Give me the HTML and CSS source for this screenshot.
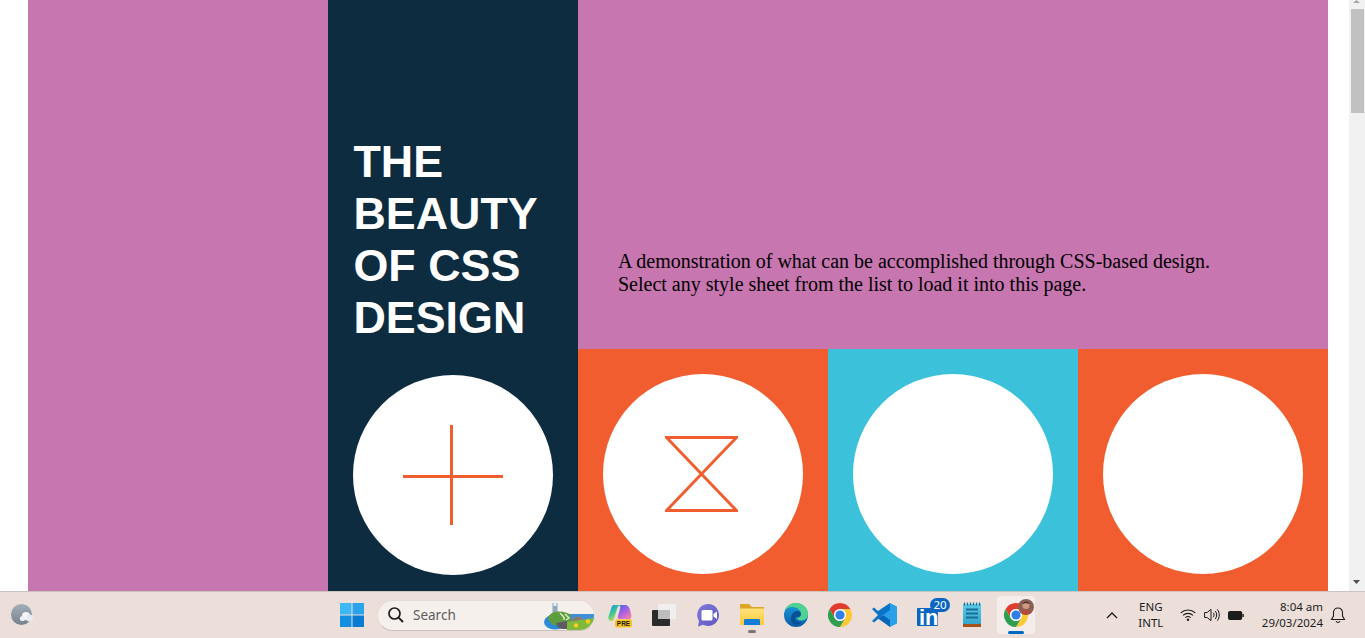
FILE: index.html
```html
<!DOCTYPE html>
<html lang="en">
  <head>
    <meta charset="UTF-8" />
    <title>The Beauty of CSS Design</title>
    <link rel="stylesheet" href="styles.css">
  </head>
  <body>
    <svg class="defs" width="0" height="0">
      <defs>
        <linearGradient id="copilotA" x1="0" y1="0" x2="0.6" y2="1">
          <stop offset="0" stop-color="#1b8fdc" />
          <stop offset="0.5" stop-color="#35c79a" />
          <stop offset="1" stop-color="#f2d83f" />
        </linearGradient>
        <linearGradient id="copilotB" x1="0" y1="0" x2="0.7" y2="1">
          <stop offset="0" stop-color="#2f6fe8" />
          <stop offset="0.5" stop-color="#a35fe4" />
          <stop offset="1" stop-color="#f07ab4" />
        </linearGradient>
        <linearGradient id="folder" x1="0" y1="0" x2="0" y2="1">
          <stop offset="0" stop-color="#ffe27a" />
          <stop offset="1" stop-color="#fcc83a" />
        </linearGradient>
        <linearGradient id="edge" x1="0" y1="0" x2="0" y2="1">
          <stop offset="0" stop-color="#1aa0dc" />
          <stop offset="1" stop-color="#0b5aa8" />
        </linearGradient>
        <linearGradient id="pad" x1="0" y1="0" x2="0" y2="1">
          <stop offset="0" stop-color="#5ccbe6" />
          <stop offset="1" stop-color="#36a6cf" />
        </linearGradient>
        <linearGradient id="meet" x1="0" y1="0" x2="1" y2="1">
          <stop offset="0" stop-color="#7f78dc" />
          <stop offset="1" stop-color="#5f58bf" />
        </linearGradient>
        <linearGradient id="moon" x1="0" y1="0" x2="0" y2="1">
          <stop offset="0" stop-color="#a3aeb8" />
          <stop offset="1" stop-color="#76838f" />
        </linearGradient>
        <symbol id="chrome" viewBox="0 0 32 32">
          <path fill="#e33b2e" d="M5.6 10A12 12 0 0 1 26.4 10H16A6 6 0 0 0 10.8 19Z" />
          <path fill="#fcc934" d="M26.4 10A12 12 0 0 1 16 28L21.2 19A6 6 0 0 0 16 10Z" />
          <path fill="#2f9e4f" d="M16 28A12 12 0 0 1 5.6 10L10.8 19A6 6 0 0 0 21.2 19Z" />
          <circle cx="16" cy="16" r="6" fill="#fff" />
          <circle cx="16" cy="16" r="4.6" fill="#2f7fe6" />
        </symbol>
      </defs>
    </svg>

    <div class="screen">
      <div class="page">
        <div class="layout">
          <div class="side"></div>

          <div class="brand">
            <h1>THE BEAUTY OF CSS DESIGN</h1>
            <div class="circle circle-brand">
              <svg width="100" height="100" viewBox="0 0 100 100">
                <rect x="47" y="0" width="3" height="100" fill="#f25d30" />
                <rect x="0" y="50" width="100" height="3" fill="#f25d30" />
              </svg>
            </div>
          </div>

          <div class="main">
            <div class="intro">
              <p>A demonstration of what can be accomplished through CSS-based design. Select any style sheet from the list to load it into this page.</p>
            </div>
            <div class="cells">
              <div class="cell orange">
                <div class="circle">
                  <svg class="hourglass" width="73" height="76" viewBox="0 0 73 76">
                    <path d="M1.5 1.5H71.5L1.5 74.5H71.5Z" fill="none" stroke="#f25d30" stroke-width="3" />
                  </svg>
                </div>
              </div>
              <div class="cell cyan"><div class="circle"></div></div>
              <div class="cell orange"><div class="circle"></div></div>
            </div>
          </div>
        </div>

        <div class="scrollbar">
          <svg class="arrow" width="7" height="3" viewBox="0 0 7 3"><path d="M3.5 0L7 3H0Z" fill="#a3a3a3" /></svg>
          <div class="thumb"></div>
          <svg class="arrow arrow-down" width="7" height="4" viewBox="0 0 7 4"><path d="M0 0H7L3.5 4Z" fill="#505050" /></svg>
        </div>
      </div>

      <footer class="taskbar">
        <div class="weather">
          <svg width="23" height="24" viewBox="0 0 23 24">
            <circle cx="10.5" cy="11.5" r="10.5" fill="url(#moon)" />
            <circle cx="15" cy="13" r="4" fill="#f4f5f6" />
            <circle cx="18.5" cy="15" r="3.5" fill="#e8ebee" />
            <circle cx="11.5" cy="15.5" r="2.6" fill="#eef0f2" />
          </svg>
        </div>

        <div class="start">
          <svg width="24" height="24" viewBox="0 0 24 24">
            <rect x="0" y="0" width="11.5" height="11.5" fill="#3cb8f2" />
            <rect x="12.5" y="0" width="11.5" height="11.5" fill="#2aa3ea" />
            <rect x="0" y="12.5" width="11.5" height="11.5" fill="#148fe0" />
            <rect x="12.5" y="12.5" width="11.5" height="11.5" fill="#0a7ad2" />
          </svg>
        </div>

        <div class="search">
          <svg width="18" height="18" viewBox="0 0 18 18">
            <circle cx="7.5" cy="7.5" r="5.5" fill="none" stroke="#1c1c1c" stroke-width="1.7" />
            <path d="M11.6 11.6L16 16" stroke="#1c1c1c" stroke-width="1.9" />
          </svg>
          <span class="search-label">Search</span>
          <svg class="search-art" width="50" height="28" viewBox="0 0 50 28">
            <rect x="22" y="12" width="28" height="9" fill="#3f8fd8" />
            <path d="M26 20Q33 9 42 20Z" fill="#8a7b72" />
            <ellipse cx="11" cy="20" rx="11" ry="7.5" fill="#2c8ad8" />
            <rect x="8.5" y="1" width="5" height="11" fill="#8fa8bb" />
            <rect x="9.5" y="0" width="3" height="4" fill="#e6edf2" />
            <path d="M4 15C8 8 20 8 27 13V20L18 23H9C6 20 4 18 4 15z" fill="#5f9e3e" />
            <path d="M12 21L23 19V27H18C15 27 13 24 12 21z" fill="#5f5a66" />
            <path d="M23 20L50 16V23C48 27 45 28 40 28H23z" fill="#7fb93a" />
            <path d="M16 11c2 3 5 3 4 7M21 12l4 4-3 2" fill="none" stroke="#e9f3d2" stroke-width="1.3" />
            <circle cx="32" cy="23.5" r="2.2" fill="#f7cf22" />
            <circle cx="44" cy="19.5" r="2.2" fill="#f7cf22" />
          </svg>
        </div>

        <div class="apps">
          <div class="app">
            <svg width="32" height="32" viewBox="0 0 32 32">
              <path d="M10 6h7c-2 0-3 1-4 4l-3 10c-.5 1.5-1 2-2 2-4 0-4-3-3-6l2-6c.6-2.5 1.5-4 3-4z" fill="url(#copilotA)" />
              <path d="M14 20c3 2 7 2 13-1 0 2-2 3-4 3H13z" fill="#e8c848" />
              <path d="M15 6h6c3 0 4 2 5 5l1 4c1 3 0 5-3 5h-8c-2 0-3-1-2-3l2-7c.4-2 .6-4-1-4z" fill="url(#copilotB)" />
              <rect x="11" y="20.5" width="17" height="8" rx="2" fill="#f7c325" />
              <text class="pre" x="19.5" y="27">PRE</text>
            </svg>
          </div>
          <div class="app">
            <svg width="32" height="32" viewBox="0 0 32 32">
              <rect x="4" y="11" width="18" height="16" rx="1" fill="#2b2b2b" />
              <rect x="10" y="5" width="18" height="15" rx="1" fill="#efefef" />
              <rect x="10" y="11" width="12" height="9" fill="#bdbdbd" />
            </svg>
          </div>
          <div class="app">
            <svg width="32" height="32" viewBox="0 0 32 32">
              <path d="M16 5a11 11 0 1 1-5 20.8L6 27.5l1-5.5A11 11 0 0 1 16 5z" fill="url(#meet)" />
              <rect x="9.5" y="11" width="11" height="10.5" rx="1.5" fill="#fff" />
              <path d="M21.5 15l3.5-2.5v7.5l-3.5-2.5z" fill="#fff" />
            </svg>
          </div>
          <div class="app">
            <svg width="32" height="32" viewBox="0 0 32 32">
              <path d="M4 6c0-.6.4-1 1-1h8l3 3h12v6H4z" fill="#dca528" />
              <rect x="4" y="9.5" width="24" height="16.5" rx="1" fill="url(#folder)" />
              <path d="M8 26v-4.5c0-1 .6-1.5 1.5-1.5h13c.9 0 1.5.5 1.5 1.5V26z" fill="#0f7cd6" />
            </svg>
            <span class="open-dot"></span>
          </div>
          <div class="app">
            <svg width="32" height="32" viewBox="0 0 32 32">
              <circle cx="16" cy="16" r="12" fill="url(#edge)" />
              <path d="M5 11C7 6.5 11 4 16 4c7 0 12 5 12 11 0 4-3 6.5-6.5 6.5-2.5 0-4.5-1-5-2.5 2.5 0 4.5-1.5 4.5-4 0-4-4-7-8.5-7C9.5 8 7 9 5 11z" fill="#4fd18f" />
              <path d="M11 20c0-5 3-8 6-8 2 0 4 1 4 3 0 2-2 3-4.5 3-1 0-1.5.6-1.5 1.5 0 2 3 4 7 4-3 3-7 3-9 1-1.5-1-2-2.5-2-4.5z" fill="#0a4f94" />
            </svg>
          </div>
          <div class="app">
            <svg width="32" height="32" viewBox="0 0 32 32"><use href="#chrome" /></svg>
          </div>
          <div class="app">
            <svg width="32" height="32" viewBox="0 0 32 32">
              <path d="M22 4l7 3.5v17L22 28l-7-12z" fill="#2aa0ea" />
              <path d="M22 4v7l-7 5-5.5 4.5L6 23.5 4 22l6-6-6-6 2-1.5 4 3.5z" fill="#0a74c8" />
              <path d="M22 28v-7l-7-5-5 3.5L22 28z" fill="#0a66b4" />
            </svg>
          </div>
          <div class="app">
            <svg width="32" height="32" viewBox="0 0 32 32">
              <rect x="5" y="9" width="21" height="18" rx="1" fill="#0a66c2" />
              <text class="in" x="7" y="25.5">in</text>
            </svg>
            <span class="badge">20</span>
          </div>
          <div class="app">
            <svg width="32" height="32" viewBox="0 0 32 32">
              <rect x="7" y="5" width="18" height="20" fill="url(#pad)" />
              <path d="M8.5 3.5v3M11.5 3.5v3M14.5 3.5v3M17.5 3.5v3M20.5 3.5v3M23.5 3.5v3" stroke="#1f6f92" stroke-width="1.2" />
              <path d="M10 10.5h12M10 14.5h12M10 18.5h12" stroke="#176f99" stroke-width="1.8" />
              <rect x="7" y="25" width="18" height="3" fill="#a5521d" />
            </svg>
          </div>
          <div class="app app-active">
            <svg width="32" height="32" viewBox="0 0 32 32"><use href="#chrome" /></svg>
            <svg class="avatar" width="16" height="16" viewBox="0 0 16 16">
              <circle cx="8" cy="8" r="8" fill="#8c5f55" />
              <circle cx="8" cy="6.5" r="3.5" fill="#d09a80" />
              <path d="M3 14c1-4 9-4 10 0l-5 2z" fill="#b8493c" />
              <path d="M4.5 5c1-3 6-3 7 0l-3.5-1z" fill="#3f2b28" />
            </svg>
            <span class="active-bar"></span>
          </div>
        </div>

        <div class="tray">
          <svg class="chevron" width="12" height="7" viewBox="0 0 12 7">
            <path d="M1 6l5-5 5 5" fill="none" stroke="#1c1c1c" stroke-width="1.3" />
          </svg>
          <div class="lang"><span>ENG</span><span>INTL</span></div>
          <div class="status-icons">
            <svg width="16" height="12" viewBox="0 0 16 12">
              <path d="M.7 3.9C4.8.1 11.2.1 15.3 3.9M3 6.3c2.9-2.6 7.1-2.6 10 0M5.3 8.6c1.6-1.3 3.8-1.3 5.4 0" fill="none" stroke="#1c1c1c" stroke-width="1.1" />
              <circle cx="8" cy="10.8" r="1.2" fill="#1c1c1c" />
            </svg>
            <svg width="16" height="14" viewBox="0 0 16 14">
              <path d="M.6 4.5h2.6L7 1.3v11.4L3.2 9.5H.6z" fill="none" stroke="#1c1c1c" stroke-width="1" />
              <path d="M9.3 4.8c1 1.3 1 3.1 0 4.4M11.3 3c1.8 2.3 1.8 5.7 0 8M13.3 1.3c2.6 3.3 2.6 8.1 0 11.4" fill="none" stroke="#1c1c1c" stroke-width="1" />
            </svg>
            <svg width="16" height="9" viewBox="0 0 16 9">
              <rect x=".6" y=".6" width="13" height="7.8" rx="1.5" fill="#1c1c1c" stroke="#1c1c1c" stroke-width="1.2" />
              <rect x="14.4" y="3" width="1.4" height="3" fill="#1c1c1c" />
            </svg>
          </div>
          <div class="clock"><span>8:04 am</span><span>29/03/2024</span></div>
          <svg class="bell" width="16" height="17" viewBox="0 0 16 17">
            <path d="M8 1C5.2 1 3.5 3 3.5 5.5V9L1.5 12.5h13L12.5 9V5.5C12.5 3 10.8 1 8 1z" fill="none" stroke="#1c1c1c" stroke-width="1.1" />
            <path d="M6 14c.3 1.8 3.7 1.8 4 0" fill="none" stroke="#1c1c1c" stroke-width="1.1" />
          </svg>
        </div>
      </footer>
    </div>
  </body>
</html>
```

FILE: styles.css
```css
* {
  box-sizing: border-box;
}

html,
body {
  margin: 0;
  height: 100%;
  overflow: hidden;
  background: #fff;
}

.defs {
  display: block;
  height: 0;
}

.screen {
  display: flex;
  flex-direction: column;
  height: 638px;
}

.page {
  display: flex;
  height: 591px;
  overflow: hidden;
  flex: none;
}

.layout {
  display: flex;
  flex: 1;
  padding-left: 28px;
  overflow: hidden;
}

.side {
  width: 300px;
  background: #c776b0;
  flex: none;
}

.brand {
  width: 250px;
  flex: none;
  background: #0e2c40;
  padding-top: 135px;
}

.brand h1 {
  margin: 0;
  padding: 0 25.5px;
  font-family: "Liberation Sans", Arial, sans-serif;
  font-size: 44.8px;
  line-height: 52px;
  font-weight: bold;
  color: #fff;
}

.main {
  width: 750px;
  flex: none;
}

.intro {
  height: 349px;
  background: #c776b0;
  padding: 250px 100px 0 40px;
}

.intro p {
  margin: 0;
  font-family: "Liberation Serif", "Times New Roman", serif;
  font-size: 20px;
  line-height: 23px;
  color: #000;
}

.cells {
  display: flex;
}

.cell {
  width: 250px;
  height: 250px;
  padding: 25px;
}

.orange {
  background: #f25d30;
}

.cyan {
  background: #3bc1da;
}

.circle {
  width: 200px;
  height: 200px;
  border-radius: 50%;
  background: #fff;
  display: flex;
  align-items: center;
  justify-content: center;
}

.circle-brand {
  margin: 32px 0 0 25px;
}

.hourglass {
  margin-right: 3px;
}

.scrollbar {
  width: 16px;
  flex: none;
  background: #f1f1f1;
  display: flex;
  flex-direction: column;
  align-items: center;
}

.arrow {
  display: block;
  margin-left: -1px;
}

.thumb {
  width: 13px;
  height: 104px;
  margin-top: 6px;
  margin-left: 1px;
  background: #c1c1c1;
}

.arrow-down {
  margin-top: auto;
  margin-bottom: 7px;
}

.taskbar {
  height: 47px;
  flex: none;
  display: flex;
  align-items: center;
  background: #ecdfda;
  border-top: 1px solid #cbc3bf;
  font-family: "Noto Sans", "Open Sans", sans-serif;
  color: #1c1c1c;
}

.taskbar svg {
  display: block;
}

.weather {
  width: 340px;
  padding-left: 11px;
  flex: none;
}

.start {
  width: 37px;
  flex: none;
}

.search {
  width: 218px;
  height: 31px;
  flex: none;
  display: flex;
  align-items: center;
  padding-left: 9px;
  background: #f6f0ed;
  border: 1px solid #e2dad6;
  border-bottom-color: #c9c1bd;
  border-radius: 16px;
  overflow: hidden;
}

.search-label {
  margin-left: 8px;
  font-size: 13.5px;
  color: #5c5c5c;
}

.search-art {
  margin-left: auto;
  margin-top: 1px;
}

.apps {
  display: flex;
  margin-left: 3px;
  flex: none;
}

.app {
  position: relative;
  width: 44px;
  height: 38px;
  flex: none;
  display: flex;
  align-items: center;
  justify-content: center;
}

.pre {
  font-family: "Liberation Sans", Arial, sans-serif;
  font-size: 6.5px;
  font-weight: bold;
  text-anchor: middle;
  fill: #1c1c1c;
}

.in {
  font-family: "Liberation Sans", Arial, sans-serif;
  font-size: 22px;
  font-weight: bold;
  fill: #fff;
}

.open-dot {
  position: absolute;
  left: 18px;
  bottom: 1px;
  width: 8px;
  height: 3px;
  border-radius: 2px;
  background: #7d7774;
}

.badge {
  position: absolute;
  left: 24px;
  top: 2px;
  width: 20px;
  height: 14px;
  border-radius: 7px;
  background: #0a66c2;
  color: #fff;
  font-size: 11.5px;
  line-height: 14px;
  text-align: center;
}

.app-active {
  background: rgba(255, 255, 255, 0.45);
  border-radius: 4px;
  width: 38px;
  margin-left: 3px;
}

.taskbar .avatar {
  position: absolute;
  left: 21px;
  top: 3px;
}

.active-bar {
  position: absolute;
  left: 11px;
  bottom: 0;
  width: 16px;
  height: 3px;
  border-radius: 2px;
  background: #0067c0;
}

.tray {
  display: flex;
  align-items: center;
  margin-left: auto;
  padding-right: 19px;
  flex: none;
  font-size: 11.5px;
}

.lang,
.clock {
  display: flex;
  flex-direction: column;
  line-height: 16px;
}

.lang {
  align-items: center;
  width: 26px;
  margin-left: 20px;
}

.status-icons {
  display: flex;
  align-items: center;
  gap: 8px;
  margin-left: 16px;
}

.clock {
  align-items: flex-end;
  margin-left: 18px;
  white-space: nowrap;
}

.bell {
  margin-left: 7px;
}
```
